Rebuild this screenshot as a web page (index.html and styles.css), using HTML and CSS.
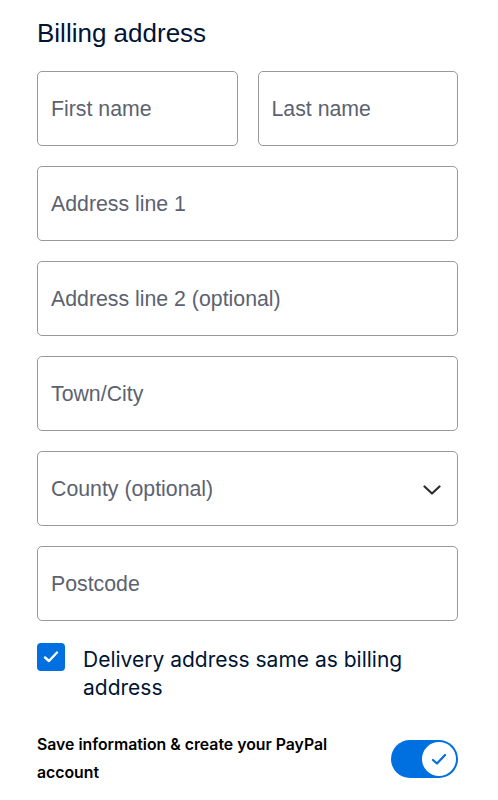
FILE: index.html
```html
<!DOCTYPE html>
<html lang="en">
<head>
    <meta charset="UTF-8">
    <meta name="viewport" content="width=device-width, initial-scale=1.0">
    <title>Billing address</title>
    <link rel="stylesheet" href="styles.css">
</head>
<body>
    <form class="billing">
        <h1>Billing address</h1>

        <div class="row">
            <div class="field"><input type="text" placeholder="First name"></div>
            <div class="field"><input type="text" placeholder="Last name"></div>
        </div>
        <div class="field"><input type="text" placeholder="Address line 1"></div>
        <div class="field"><input type="text" placeholder="Address line 2 (optional)"></div>
        <div class="field"><input type="text" placeholder="Town/City"></div>
        <div class="field select">
            <span class="select-label">County (optional)</span>
            <svg class="chevron" width="18" height="10" viewBox="0 0 18 10">
                <path d="M1.5 1.5 L9 8.5 L16.5 1.5" fill="none" stroke="#2c2e2f" stroke-width="2.2" stroke-linecap="round" stroke-linejoin="round"/>
            </svg>
        </div>
        <div class="field"><input type="text" placeholder="Postcode"></div>

        <label class="check">
            <span class="box">
                <svg width="16" height="14" viewBox="0 0 16 14">
                    <path d="M2 7.5 L6 11 L14 2.5" fill="none" stroke="#fff" stroke-width="2.4" stroke-linecap="round" stroke-linejoin="round"/>
                </svg>
            </span>
            <span class="check-text">Delivery address same as billing address</span>
        </label>

        <div class="save">
            <p>Save information &amp; create your PayPal account</p>
            <span class="toggle">
                <span class="knob">
                    <svg width="16" height="13" viewBox="0 0 16 13">
                        <path d="M2 7 L6 10.5 L14 2" fill="none" stroke="#0070e0" stroke-width="2.2" stroke-linecap="round" stroke-linejoin="round"/>
                    </svg>
                </span>
            </span>
        </div>
    </form>
</body>
</html>
```

FILE: styles.css
```css
body {
    margin: 0;
    background-color: #fff;
    font-family: "Liberation Sans", Arial, sans-serif;
    color: #001435;
}

.billing {
    width: 421px;
    margin-left: 37px;
    padding-top: 18px;
    display: flex;
    flex-direction: column;
    gap: 20px;
}

h1 {
    margin: 0 0 3px;
    font-size: 26px;
    line-height: 30px;
    font-weight: 400;
    color: #001435;
}

.row {
    display: flex;
    gap: 20px;
}

.row .field {
    flex: 1;
}

.field {
    height: 75px;
    box-sizing: border-box;
    border: 1px solid #999;
    border-radius: 5px;
    display: flex;
    align-items: center;
    padding: 2px 14px 0 13px;
}

.field input {
    width: 100%;
    border: none;
    outline: none;
    padding: 0;
    background: transparent;
    font-family: "Liberation Sans", Arial, sans-serif;
    font-size: 21.3px;
    color: #001435;
}

.field input::placeholder {
    color: #5c6270;
    opacity: 1;
}

.select {
    justify-content: space-between;
    padding-right: 16px;
}

.select-label {
    font-size: 21.3px;
    color: #5c6270;
}

.check {
    display: flex;
    gap: 18px;
    align-items: flex-start;
    margin-top: 2px;
}

.box {
    flex: none;
    width: 28px;
    height: 28px;
    border-radius: 4px;
    background-color: #0070e0;
    display: flex;
    align-items: center;
    justify-content: center;
}

.check-text {
    padding-top: 3px;
    font-family: Inter, "Liberation Sans", sans-serif;
    font-size: 21px;
    line-height: 28px;
    color: #001435;
}

.save {
    display: flex;
    align-items: center;
    justify-content: space-between;
    margin-top: 9px;
}

.save p {
    margin: 0;
    width: 305px;
    font-family: Inter, "Liberation Sans", sans-serif;
    font-size: 15.8px;
    font-weight: 600;
    line-height: 28px;
    color: #000;
}

.toggle {
    width: 67px;
    height: 38px;
    border-radius: 19px;
    background-color: #0070e0;
    display: flex;
    justify-content: flex-end;
    align-items: center;
    padding-right: 2px;
    box-sizing: border-box;
}

.knob {
    width: 34px;
    height: 34px;
    border-radius: 50%;
    background-color: #fff;
    display: flex;
    align-items: center;
    justify-content: center;
}
```
